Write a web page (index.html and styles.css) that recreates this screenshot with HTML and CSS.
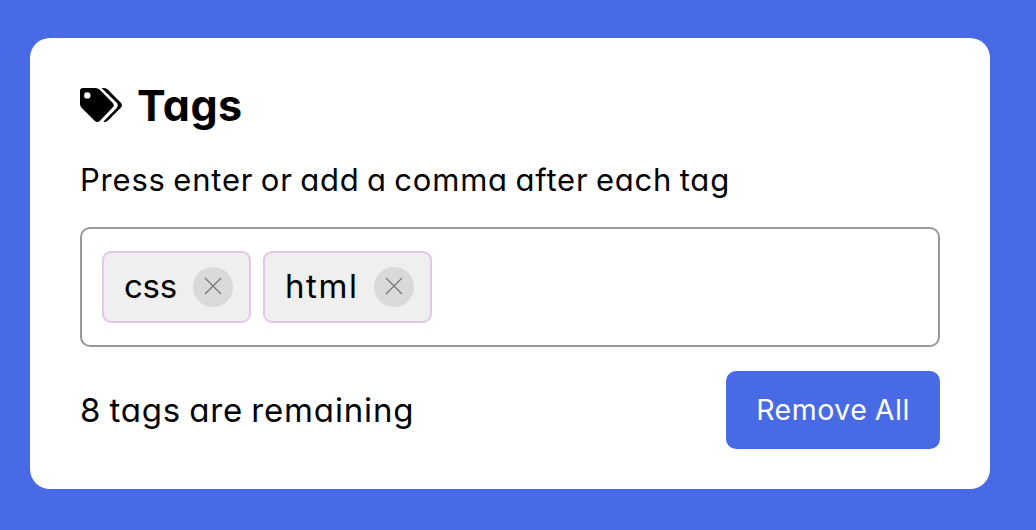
FILE: index.html
```
<!DOCTYPE html>
<html lang="en">
<head>
<meta charset="utf-8">
<title>Tags</title>
<link rel="stylesheet" href="styles.css">
</head>
<body>
<main class="card">
  <header class="title">
    <svg class="title-icon" viewBox="0 0 42 34" width="42" height="34" aria-hidden="true">
      <path fill-rule="evenodd" d="M3 0H15.500Q18 0 19.800 1.800L32.600 14.700Q35 17.200 32.600 19.600L20 32.700Q17.300 35.300 14.600 32.700L1.600 19.700Q0 18 0 16V3Q0 0 3 0ZM7.300 4.200a3.200 3.200 0 1 0 0 6.400a3.200 3.200 0 1 0 0-6.400Z"/>
      <path d="M21.500 0H24Q26.200 0 28 1.800L40.800 14.700Q43.100 17.200 40.800 19.700L28 32.600Q26.300 34.200 24 34L23.500 33.500L36.500 20.300Q39 17.200 36.500 14.500Z"/>
    </svg>
    <h1 class="heading">Tags</h1>
  </header>
  <p class="hint">Press enter or add a comma after each tag</p>
  <ul class="tag-box">
    <li class="tag"><span class="tag-name">css</span><button class="remove" aria-label="Remove css"><svg viewBox="0 0 18 18" width="18" height="18"><path d="M1 1L17 17M17 1L1 17"/></svg></button></li>
    <li class="tag"><span class="tag-name wide">html</span><button class="remove" aria-label="Remove html"><svg viewBox="0 0 18 18" width="18" height="18"><path d="M1 1L17 17M17 1L1 17"/></svg></button></li>
  </ul>
  <footer class="details">
    <p class="count">8 tags are remaining</p>
    <button class="clear">Remove All</button>
  </footer>
</main>
</body>
</html>
```
FILE: styles.css
```
* { box-sizing: border-box; margin: 0; padding: 0; }
body {
  height: 530px;
  padding: 38px 46px 41px 30px;
  background: #486be5;
  color: #000;
  font-family: Inter, "Open Sans", sans-serif;
  font-feature-settings: "cv11";
  font-weight: 430;
  overflow: hidden;
}
button { border: 0; font: inherit; font-feature-settings: inherit; }
.card {
  height: 451px;
  padding: 40px 50px;
  border-radius: 20px;
  background: #fff;
}
.title { display: flex; align-items: center; height: 54px; }
.title-icon { flex: none; }
.heading {
  margin-left: 15px;
  font-size: 43px;
  line-height: 54px;
  font-weight: 650;
  letter-spacing: 0.5px;
  white-space: nowrap;
}
.hint {
  margin: 26px 0;
  font-size: 31px;
  line-height: 43px;
  letter-spacing: 0.8px;
  word-spacing: -2px;
  white-space: nowrap;
}
.tag-box {
  display: flex;
  gap: 12px;
  height: 120px;
  padding: 22px 20px;
  border: 2px solid #999;
  border-radius: 10px;
  list-style: none;
}
.tag {
  display: flex;
  align-items: center;
  justify-content: space-between;
  height: 72px;
  padding: 0 16px 0 20px;
  border: 2px solid #decbdf;
  border-radius: 9px;
  background: #efefef;
  font-size: 33px;
}
.tag:first-child { width: 149px; }
.tag:last-child { width: 169px; }
.tag-name { padding-bottom: 2px; letter-spacing: -0.3px; }
.tag-name.wide { letter-spacing: 1.6px; }
.remove {
  display: flex;
  align-items: center;
  justify-content: center;
  width: 40px;
  height: 40px;
  padding-bottom: 2px;
  border-radius: 50%;
  background: #d9d9d9;
}
.remove path { fill: none; stroke: #777; stroke-width: 1.2; }
.details { display: flex; align-items: center; justify-content: space-between; margin-top: 24px; }
.count {
  font-size: 33px;
  line-height: 48px;
  letter-spacing: 0.85px;
  word-spacing: -2px;
  white-space: nowrap;
}
.clear {
  width: 214px;
  height: 78px;
  padding-bottom: 2px;
  border-radius: 10px;
  background: #486be5;
  color: #fff;
  font-size: 28.500px;
  letter-spacing: 0.5px;
  word-spacing: -1px;
  white-space: nowrap;
}
```
